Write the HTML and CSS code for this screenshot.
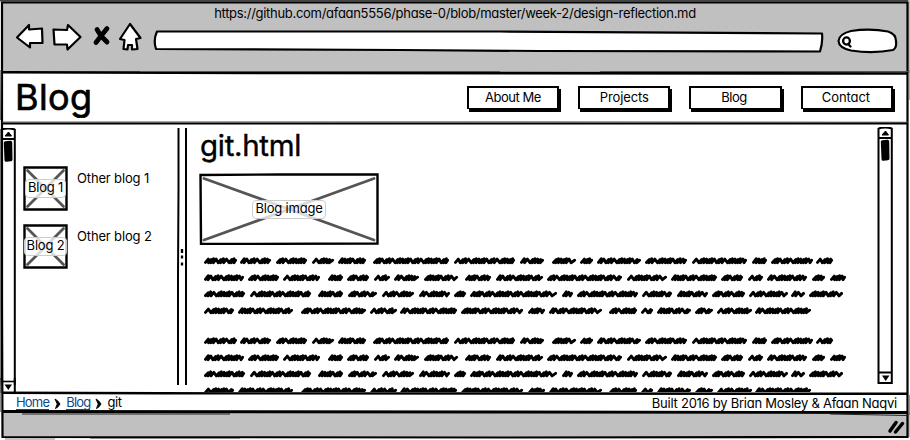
FILE: index.html
```html
<!DOCTYPE html>
<html lang="en">
<head>
<meta charset="utf-8">
<title>Blog</title>
<link rel="stylesheet" href="styles.css">
</head>
<body>
<div class="window">
  <header class="chrome">
    <div class="address">https://github.com/afaan5556/phase-0/blob/master/week-2/design-reflection.md</div>
    <svg class="toolbar" width="910" height="50" viewBox="0 22 910 50">
      <g fill="#fff" stroke="#000" stroke-width="2.200" stroke-linejoin="round">
        <path d="M17 37.500 L29 25 L29 29.500 L42 28.500 L42.500 43 L30 43 L30 47.500 Z"/>
        <path d="M53.500 29.500 L67 30 L68 25 L80.500 37 L67.500 49.500 L67 44.500 L54.500 44.500 Z"/>
        <path d="M130 24 L140.500 38 L136 39 L137.500 49 L132 49.500 L132 45 L128 45 L127.500 49.500 L123.500 49 L124.500 40 L120 39 Z"/>
        <path d="M157 31.500 L500 31.500 L822 33.500 Q823 42 820 51.500 L540 51 L400 50 L156 49 Q153 40 157 31.500 Z"/>
        <path d="M851 31 Q870 28 888 31.500 Q896 34 896 41 Q897 48 893 50 Q873 54 851 50.500 Q839 48 838.500 41 Q839 34 851 31 Z"/>
      </g>
      <path d="M97 29.500 L101 36 L107 42 M107 28.500 L101 36 L96 42.500" fill="none" stroke="#000" stroke-width="4.800" stroke-linecap="round" stroke-linejoin="round"/>
      <g fill="none" stroke="#000" stroke-width="2.300" stroke-linecap="round">
        <ellipse cx="846.500" cy="41" rx="3.400" ry="3.600"/>
        <path d="M848.500 44.500 L850.500 46.500"/>
      </g>
    </svg>
  </header>

  <div class="masthead">
    <h1>Blog</h1>
    <nav>
      <a>About Me</a><a>Projects</a><a>Blog</a><a>Contact</a>
    </nav>
  </div>

  <main>
    <svg class="scroll" width="16" height="266" viewBox="0 0 16 266">
      <use href="#bar"/>
      <path d="M1.500 250 V266 M14.800 250 V266" stroke="#000" stroke-width="2"/>
    </svg>
    <aside>
      <div class="entry">
        <div class="thumb">
          <svg viewBox="0 0 45 45"><path class="edge" d="M1.500 1.500 H43.500 V43.500 H1.500 Z"/><path class="cross" d="M4.500 4.500 L40.500 40.500 M40.500 4.500 L4.500 40.500"/></svg>
          <span>Blog 1</span>
        </div>
        <p>Other blog 1</p>
      </div>
      <div class="entry">
        <div class="thumb">
          <svg viewBox="0 0 45 45"><path class="edge" d="M1.500 1.500 H43.500 V43.500 H1.500 Z"/><path class="cross" d="M4.500 4.500 L40.500 40.500 M40.500 4.500 L4.500 40.500"/></svg>
          <span>Blog 2</span>
        </div>
        <p>Other blog 2</p>
      </div>
    </aside>
    <svg class="splitter" width="12" height="257" viewBox="0 0 12 257">
      <path d="M2.500 0 L2.500 60 L2 150 L2 257 M10 0 L10 257" fill="none" stroke="#000" stroke-width="2"/>
      <path d="M6 121 v4 M6 127.500 v3 M6 134.500 v3" stroke="#000" stroke-width="2.300"/>
    </svg>
    <article>
      <h2>git.html</h2>
      <div class="thumb wide">
        <svg viewBox="0 0 180 72"><path class="edge" d="M1.500 2 L80 1.500 H178.500 V70.500 L2 71 Z"/><path class="cross" d="M5 5.500 L175 67 M175 5.500 L5 67"/></svg>
        <span>Blog image</span>
      </div>
      <svg class="scribble" width="660" height="144" viewBox="200 248 660 144"></svg>
    </article>
    <svg class="scroll right" width="16" height="258" viewBox="0 0 16 258">
      <g id="bar" fill="none" stroke="#000">
        <path d="M1.500 1.500 Q8 -0.500 15 1.500 M1.500 1 V257 M14.800 1 V257" stroke-width="2"/>
        <path d="M1 11 H15" stroke-width="2"/>
        <path d="M8.500 4 L11.500 8 L5 8 Z" fill="#000"/>
        <path d="M5.500 15 L10.500 14.500 L10.800 31.500 L6.200 32 Z" fill="#000" stroke-width="3.400" stroke-linejoin="round"/>
      </g>
      <path d="M1 245.500 H15 M1 256 H15" stroke="#000" stroke-width="1.800"/>
      <path d="M5 248.500 H12.500 L8.700 254 Z"/>
    </svg>
  </main>

  <footer>
    <div class="crumbs">
      <a>Home</a>
      <svg width="8" height="12" viewBox="0 0 8 12"><path d="M1 1 Q4 2.500 6 6 Q4 9.500 1.500 10.500 L3.300 6 Z" stroke="#000" stroke-linejoin="round"/></svg>
      <a>Blog</a>
      <svg width="8" height="12" viewBox="0 0 8 12"><path d="M1 1 Q4 2.500 6 6 Q4 9.500 1.500 10.500 L3.300 6 Z" stroke="#000" stroke-linejoin="round"/></svg>
      <b>git</b>
    </div>
    <div class="credit">Built 2016 by Brian Mosley &amp; Afaan Naqvi</div>
  </footer>
  <div class="status"></div>

  <svg class="frame" width="910" height="440" viewBox="0 0 910 440" fill="none" stroke="#000">
    <path d="M0 0.700 H908" stroke="#444" stroke-width="1.600"/>
    <path d="M2 2.500 H907.500 L907.500 437 L500 437.500 L2.500 437 L2 300 Z" stroke-width="2.200"/>
    <path d="M0.800 70 L0.500 120 M0.800 380 V412 M909 70 V100 M909.200 395 V415" stroke="#666"/>
    <path d="M2 72.300 L300 73 L908 73.500" stroke-width="2.600"/>
    <path d="M140 71.500 H500 M600 71.500 H908" stroke="#555"/>
    <path d="M2 122 L500 121.800 L908 122.200" stroke="#666"/>
    <path d="M2 123.500 H908" stroke-width="2.200"/>
    <path d="M2 392.800 L160 393.300 L908 393.800" stroke-width="2.400"/>
    <path d="M2 411.500 L500 412 L908 412.500" stroke-width="2.800"/>
    <path d="M22 414 H230 M830 414 L908 415.500" stroke="#222"/>
    <path d="M5 439 H55 M90 438.500 H240" stroke="#888"/>
    <path d="M890 431 L896 422.500 M895.500 432 L902.500 423.500" stroke-width="3.500" stroke-linecap="round"/>
  </svg>
  <svg class="left-end" width="16" height="14" viewBox="0 0 16 14"><path d="M1 1.500 H14.500" stroke="#000" stroke-width="1.600"/><path d="M4.500 4.500 H12 L8.300 10 Z"/></svg>
</div>
<script src="scribble.js"></script>
</body>
</html>
```
FILE: styles.css
```css
* { box-sizing: border-box; }
body {
  margin: 0;
  background: #fff;
  color: #000;
  font: 13px/18px Inter, "Open Sans", sans-serif;
  font-feature-settings: "cv11" 1, "calt" 0;
  letter-spacing: -0.25px;
}
h1, h2, p { margin: 0; font-weight: 400; }
svg { display: block; flex: none; }
.window {
  position: relative;
  width: 910px;
  height: 440px;
  overflow: hidden;
  display: grid;
  grid-template-rows: 73px 50px 270px 19px 25px;
}
.chrome { background: #c0c0c0; margin: 0 2px; }
.address { height: 22px; padding: 4px 2px 0 0; text-align: center; letter-spacing: -0.295px; }
.toolbar { margin-left: -2px; }
.masthead {
  display: flex;
  justify-content: space-between;
  padding: 0 19px 0 15px;
}
h1 { font-size: 36px; line-height: 48px; letter-spacing: 0.4px; -webkit-text-stroke: 0.7px #000; }
nav { display: flex; gap: 19px; padding-top: 13px; }
nav a {
  width: 92.300px;
  height: 23px;
  border: 2px solid #000;
  border-width: 2px 2px 1px;
  box-shadow: 2px 3px 0 #000;
  line-height: 18px;
  text-align: center;
  letter-spacing: -0.1px;
}
nav a:first-child { letter-spacing: -0.45px; }
nav a:nth-child(3) { letter-spacing: -0.5px; padding-right: 3px; }
nav a:last-child { padding-right: 2px; }
main { display: flex; overflow: hidden; }
.scroll { margin-top: 5px; }
.scroll.right { margin-left: auto; margin-right: 18px; margin-top: 4px; transform: translateX(-1px); }
aside { width: 160px; padding: 43px 0 0 7px; }
.entry { display: flex; gap: 9px; height: 58px; }
.entry p { padding-top: 3px; letter-spacing: -0.15px; }
.thumb { position: relative; display: grid; place-items: center; width: 45px; height: 45px; }
.thumb svg { position: absolute; inset: 0; width: 100%; height: 100%; }
.edge { fill: #fff; stroke: #000; stroke-width: 2.400; }
.cross { fill: none; stroke: #555; stroke-width: 2.800; stroke-linecap: round; }
.thumb span {
  position: relative;
  white-space: nowrap;
  line-height: 15px;
  padding: 0 2px 2px;
  letter-spacing: -0.2px;
  border: 1px solid #ccc;
  border-radius: 4px;
  background: rgba(255, 255, 255, .78);
}
.splitter { margin-top: 5px; }
article { width: 665px; padding: 3px 0 0 11px; }
h2 { font-size: 29.500px; line-height: 39px; letter-spacing: -0.3px; padding-left: 1px; -webkit-text-stroke: 0.4px #000; }
.wide { width: 180px; height: 72px; margin: 8px 0 3px; }
.scribble { margin-left: 1px; }
footer {
  display: flex;
  justify-content: space-between;
  padding: 1px 15px 0 16px;
}
.crumbs { display: flex; gap: 5px; margin-top: -1px; letter-spacing: -0.8px; }
.crumbs svg { margin: 5px -1px 0 0; }
.crumbs a { color: #0b4a8f; border-bottom: 1px solid #0b4a8f; height: 17px; }
.crumbs b { font-weight: 400; letter-spacing: -0.4px; }
.status { background: #c0c0c0; margin: 0 2px; }
.frame { position: absolute; inset: 0; pointer-events: none; }
.left-end { position: absolute; left: 0; top: 380px; }
```
FILE: scribble.js
```js
const lines = [
  [204,237,240,271,276,307,312,334,338,366,373,449,454,515,520,544,552,576,580,593,597,641,645,687,692,747,752,767,771,813,816,833],
  [204,244,248,279,283,320,328,343,347,369,374,390,394,419,424,458,465,491,496,543,547,622,627,667,671,717,721,743,748,763,767,807,812,825,830,846],
  [204,245,250,311,318,343,348,377,382,414,419,450,454,466,470,557,562,573,577,638,642,672,677,708,712,745,749,788,791,805,809,843],
  [204,234,238,293,301,366,370,397,400,457,461,523,528,545,549,602,609,637,641,653,657,691,695,713,717,752,755,811]
];
const steps = [3, 2.3, 2.6, 4.8, 2.4, 3.1, 5.4, 2.2, 2.7];
function word(x1, x2, y, seed) {
  let x = x1 + 1.5, i = seed;
  let d = `M${x} ${y + 1.6}`;
  while (x < x2 - 5) {
    const s = steps[i++ % steps.length];
    const top = y - 2.1 + (i % 3) * 0.4;
    d += `L${x + 2.8} ${top}L${Math.min(x + s, x2 - 3)} ${y + 1.9}`;
    x += s;
  }
  return d + `L${x2 - 1.4} ${y - 0.6}`;
}
let d = "";
[260.8, 340.8].forEach(top => lines.forEach((line, n) => {
  for (let k = 0; k < line.length; k += 2)
    d += word(line[k], line[k + 1], top + [0, 17, 33.2, 50][n], k + n * 2);
}));
const path = document.createElementNS("http://www.w3.org/2000/svg", "path");
path.setAttribute("d", d);
path.setAttribute("fill", "none");
path.setAttribute("stroke", "#000");
path.setAttribute("stroke-width", "2.9");
path.setAttribute("stroke-linejoin", "round");
path.setAttribute("stroke-linecap", "round");
document.querySelector(".scribble").append(path);
```
